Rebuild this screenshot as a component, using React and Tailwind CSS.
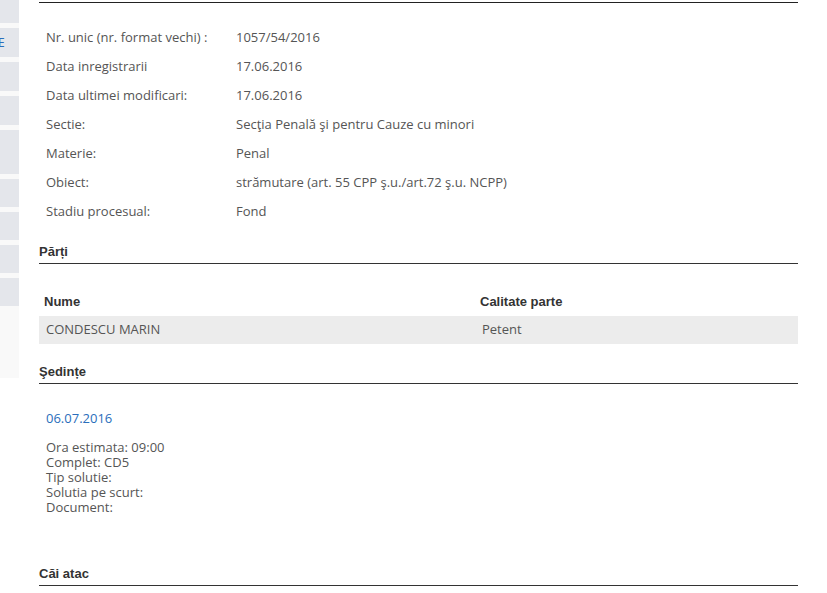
import React from "react";

const details = [
    ["Nr. unic (nr. format vechi) :", "1057/54/2016"],
    ["Data inregistrarii", "17.06.2016"],
    ["Data ultimei modificari:", "17.06.2016"],
    ["Sectie:", "Secţia Penală şi pentru Cauze cu minori"],
    ["Materie:", "Penal"],
    ["Obiect:", "strămutare (art. 55 CPP ş.u./art.72 ş.u. NCPP)"],
    ["Stadiu procesual:", "Fond"],
];

const sideBoxes = ["h-[23px]", "h-[29px]", "h-[29px]", "h-[29px]", "h-[44px]", "h-[28px]", "h-[28px]", "h-[28px]", "h-[28px]"];

function SectionTitle({ children, className = "" }) {
    return (
        <h2 className={`text-[13px] font-bold text-[#333] leading-[16px] pb-[3px] border-b border-[#333] font-['Liberation_Sans',Arial,sans-serif] ${className}`}>
            {children}
        </h2>
    );
}

export default function App() {
    return (
        <div className="flex bg-white min-h-[593px] font-['Open_Sans',Tahoma,sans-serif] text-[13px] text-[#555]">
            <div className="w-[19px] h-[378px] bg-[#f9f9f9] flex flex-col gap-[5px]">
                {sideBoxes.map((h, i) => (
                    <div key={i} className={`${h} bg-[#e4e6eb] flex items-center overflow-hidden`}>
                        {i === 1 && <span className="text-[#2a6ebb] text-[12px] -ml-[2px]">E</span>}
                    </div>
                ))}
            </div>

            <div className="ml-[20px] w-[759px]">
                <div className="border-t border-[#222] mt-[2px]"></div>

                <div className="pt-[20px] px-[7px]">
                    {details.map(([label, value]) => (
                        <div key={label} className="flex h-[29px] items-center">
                            <span className="w-[190px] shrink-0">{label}</span>
                            <span>{value}</span>
                        </div>
                    ))}
                </div>

                <SectionTitle className="mt-[18px]">Părți</SectionTitle>

                <div className="mt-[23px]">
                    <div className="flex h-[29px] items-center font-bold text-[#333] text-[13px] font-['Liberation_Sans',Arial,sans-serif]">
                        <span className="w-[441px] pl-[5px]">Nume</span>
                        <span>Calitate parte</span>
                    </div>
                    <div className="flex h-[28px] items-center bg-[#ececec]">
                        <span className="w-[441px] pl-[7px]">CONDESCU MARIN</span>
                        <span className="pl-[2px]">Petent</span>
                    </div>
                </div>

                <SectionTitle className="mt-[20px]">Şedințe</SectionTitle>

                <div className="px-[7px] pt-[26px]">
                    <p className="text-[#2a6ebb] leading-[16px]">06.07.2016</p>
                    <div className="mt-[14px] leading-[15px]">
                        <p>Ora estimata: 09:00</p>
                        <p>Complet: CD5</p>
                        <p>Tip solutie:</p>
                        <p>Solutia pe scurt:</p>
                        <p>Document:</p>
                    </div>
                </div>

                <SectionTitle className="mt-[51px]">Căi atac</SectionTitle>
            </div>
        </div>
    );
}
